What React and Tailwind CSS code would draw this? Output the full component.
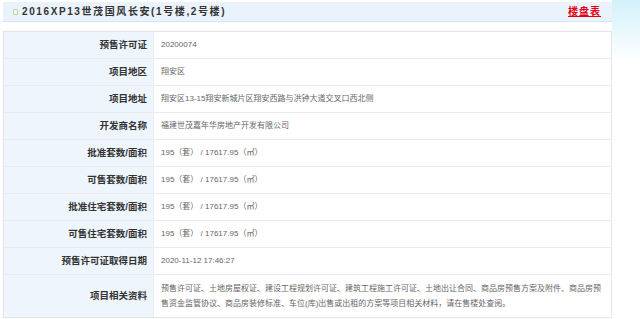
import React from 'react';

const area = '195（套） / 17617.95（㎡）';

const rows = [
  ['预售许可证', '20200074'],
  ['项目地区', '翔安区'],
  ['项目地址', '翔安区13-15翔安新城片区翔安西路与洪钟大道交叉口西北侧'],
  ['开发商名称', '福建世茂嘉年华房地产开发有限公司'],
  ['批准套数/面积', area],
  ['可售套数/面积', area],
  ['批准住宅套数/面积', area],
  ['可售住宅套数/面积', area],
  ['预售许可证取得日期', '2020-11-12 17:46:27'],
];

const font = { fontFamily: '"Liberation Sans", "Noto Sans CJK SC", sans-serif' };

const App = () => {
  return (
    <div className="flex w-[640px] h-[319px] overflow-hidden bg-white" style={font}>
      <div className="w-[612px] pl-[3px] pt-[2px] flex flex-col">
        <div className="h-[20px] flex items-center justify-between bg-[#eaf2fb] border-b border-[#d5e3f2] pl-[10px] pr-[11px]">
          <div className="flex items-center gap-[4px]">
            <span className="w-[5px] h-[6px] border border-[#b9d3a8] rounded-[1px] bg-[#f3f8ef]" />
            <span className="text-[10px] font-bold text-[#333] tracking-[1.6px]">2016XP13世茂国风长安(1号楼,2号楼)</span>
          </div>
          <span className="text-[10px] font-bold text-[#e60012] underline tracking-[1px]">楼盘表</span>
        </div>
        <div className="mt-[9px] border border-[#e6e6e6] shadow-[0_0_2px_rgba(0,0,0,0.06)]">
          {rows.map(([label, value]) => (
            <div key={label} className="flex h-[27px] border-b border-[#ebebeb]">
              <div className="w-[150px] shrink-0 bg-[#eef5fd] border-r border-[#e6eef7] flex items-center justify-end pr-[6px] text-[9.5px] font-bold text-[#333]">
                {label}
              </div>
              <div className="flex-1 flex items-center pl-[7px] text-[8px] text-[#666]">{value}</div>
            </div>
          ))}
          <div className="flex h-[42px]">
            <div className="w-[150px] shrink-0 bg-[#eef5fd] border-r border-[#e6eef7] flex items-center justify-end pr-[6px] text-[9.5px] font-bold text-[#333]">
              项目相关资料
            </div>
            <div className="flex-1 flex items-center pl-[7px] pr-[10px] text-[8px] leading-[15px] text-[#666]">
              预售许可证、土地房屋权证、建设工程规划许可证、建筑工程施工许可证、土地出让合同、商品房预售方案及附件、商品房预售资金监管协议、商品房装修标准、车位(库)出售或出租的方案等项目相关材料，请在售楼处查阅。
            </div>
          </div>
        </div>
      </div>
      <div className="flex-1 bg-gradient-to-b from-[#d3f1fb] to-white to-[20%]" />
    </div>
  );
};

export default App;
